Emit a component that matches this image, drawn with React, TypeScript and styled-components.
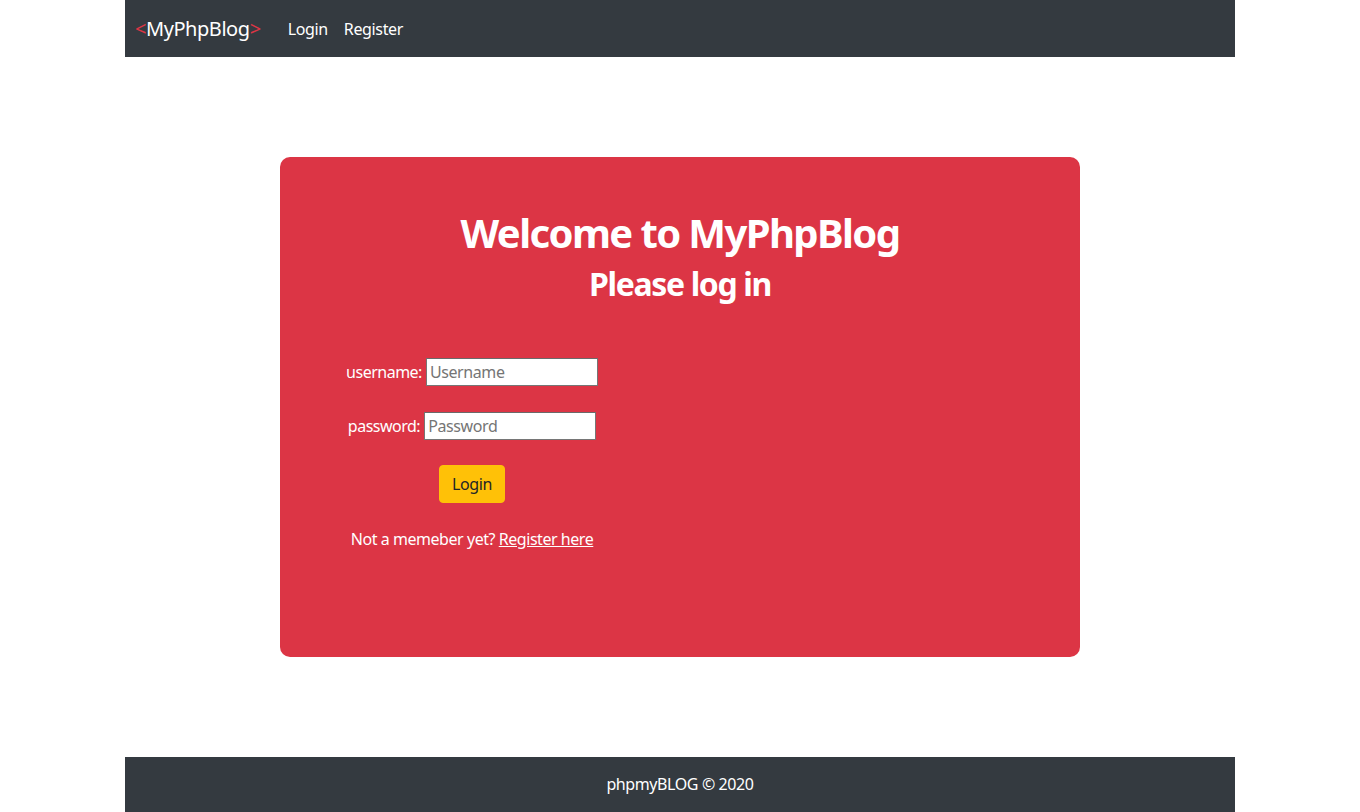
import React from "react";
import styled, { createGlobalStyle } from "styled-components";

const GlobalStyle = createGlobalStyle`
  html, body { margin: 0; padding: 0; background: #fff; }
  body {
    font-family: "Noto Sans", "Open Sans", sans-serif;
    font-size: 16px;
    line-height: 1.5;
    color: #212529;
  }
  * { box-sizing: border-box; }
`;

const Container = styled.div`
  width: 1110px;
  margin: 0 auto;
`;

const Navbar = styled.nav`
  height: 57px;
  background: #343a40;
  display: flex;
  align-items: center;
  padding: 0 10px;
`;

const Brand = styled.a`
  font-size: 20px;
  color: #fff;
  text-decoration: none;
  margin-right: 19px;
  letter-spacing: -0.45px;
`;

const Bracket = styled.span`
  color: #dc3545;
`;

const NavLink = styled.a`
  color: #fff;
  font-size: 16px;
  text-decoration: none;
  padding: 0 8px;
  letter-spacing: -0.35px;
`;

const Main = styled.main`
  padding: 100px 0;
  display: flex;
  justify-content: center;
`;

const Card = styled.section`
  width: 800px;
  height: 500px;
  background: #dc3545;
  border-radius: 10px;
  padding-top: 52px;
  color: #fff;
`;

const Title = styled.h1`
  margin: 0 0 8px;
  font-size: 40px;
  line-height: 48px;
  font-weight: 700;
  text-align: center;
  letter-spacing: -1.6px;
`;

const Subtitle = styled.h2`
  margin: 0;
  font-size: 32px;
  line-height: 38px;
  font-weight: 700;
  text-align: center;
  letter-spacing: -1.35px;
`;

const Form = styled.form`
  width: 384px;
  margin-top: 55px;
  display: flex;
  flex-direction: column;
  align-items: center;
`;

const Row = styled.div<{ $gap?: number }>`
  display: flex;
  align-items: center;
  gap: 4px;
  height: 28px;
  margin-bottom: ${(p) => p.$gap ?? 26}px;
`;

const Label = styled.label`
  font-size: 16px;
  color: #fff;
  letter-spacing: -0.5px;
`;

const Input = styled.input`
  width: 172px;
  height: 28px;
  border: 1px solid #767676;
  border-top-color: #6a6a6a;
  background: #fff;
  font-family: inherit;
  font-size: 16px;
  padding: 0 3px;
  color: #212529;
  letter-spacing: -0.4px;
  &::placeholder { color: #757575; }
  outline: none;
`;

const Button = styled.button`
  margin-top: 0;
  background: #ffc107;
  color: #212529;
  border: 1px solid #ffc107;
  border-radius: 4px;
  height: 38px;
  padding: 0 12px;
  font-family: inherit;
  font-size: 16px;
  letter-spacing: -0.4px;
  cursor: pointer;
`;

const Note = styled.p`
  margin: 24px 0 0;
  font-size: 16px;
  line-height: 24px;
  color: #fff;
  letter-spacing: -0.45px;
`;

const RegisterLink = styled.a`
  color: #fff;
  text-decoration: underline;
`;

const Footer = styled.footer`
  height: 55px;
  background: #343a40;
  color: #fff;
  display: flex;
  justify-content: center;
  padding-top: 15px;
  font-size: 16px;
  letter-spacing: -0.4px;
`;

export default function App() {
  return (
    <>
      <GlobalStyle />
      <Container>
        <Navbar>
          <Brand href="#">
            <Bracket>&lt;</Bracket>MyPhpBlog<Bracket>&gt;</Bracket>
          </Brand>
          <NavLink href="#">Login</NavLink>
          <NavLink href="#">Register</NavLink>
        </Navbar>
        <Main>
          <Card>
            <Title>Welcome to MyPhpBlog</Title>
            <Subtitle>Please log in</Subtitle>
            <Form onSubmit={(e) => e.preventDefault()}>
              <Row>
                <Label htmlFor="username">username:</Label>
                <Input id="username" placeholder="Username" />
              </Row>
              <Row $gap={25}>
                <Label htmlFor="password">password:</Label>
                <Input id="password" type="password" placeholder="Password" />
              </Row>
              <Button type="submit">Login</Button>
              <Note>
                Not a memeber yet? <RegisterLink href="#">Register here</RegisterLink>
              </Note>
            </Form>
          </Card>
        </Main>
        <Footer>phpmyBLOG © 2020</Footer>
      </Container>
    </>
  );
}
